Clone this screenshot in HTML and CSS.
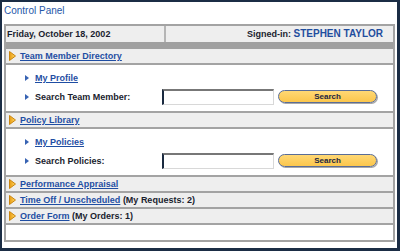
FILE: index.html
```html
<!DOCTYPE html>
<html lang="en">
<head>
<meta charset="UTF-8" />
<title>Control Panel</title>
<link rel="stylesheet" href="styles.css">
</head>
<body>

<div class="frame">
  <div class="title">Control Panel</div>

  <div class="panel">
    <div class="head">
      <div class="head-date">Friday, October 18, 2002</div>
      <div class="head-user">Signed-in: <span class="user-name">STEPHEN TAYLOR</span></div>
    </div>
    <div class="bar"></div>

    <div class="section">
      <svg class="arrow" width="7" height="10" viewBox="0 0 7 10"><defs><linearGradient id="ag" x1="0" y1="0" x2="1" y2="0"><stop offset="0" stop-color="#e89a10"/><stop offset="1" stop-color="#ffd865"/></linearGradient></defs><polygon points="0.5,0.5 6.5,5 0.5,9.5" fill="url(#ag)" stroke="#c98512" stroke-width="1"/></svg>
      <a href="#">Team Member Directory</a>
    </div>
    <div class="body">
      <div class="item">
        <svg class="bullet" width="4" height="6" viewBox="0 0 4 6"><polygon points="0,0 4,3 0,6" fill="#3763b3"/></svg>
        <a href="#">My Profile</a>
      </div>
      <div class="item">
        <span class="item-label"><svg class="bullet" width="4" height="6" viewBox="0 0 4 6"><polygon points="0,0 4,3 0,6" fill="#3763b3"/></svg>Search Team Member:</span>
        <input class="search-input" type="text">
        <button class="search-btn">Search</button>
      </div>
    </div>

    <div class="section">
      <svg class="arrow" width="7" height="10" viewBox="0 0 7 10"><polygon points="0.5,0.5 6.5,5 0.5,9.5" fill="url(#ag)" stroke="#c98512" stroke-width="1"/></svg>
      <a href="#">Policy Library</a>
    </div>
    <div class="body">
      <div class="item">
        <svg class="bullet" width="4" height="6" viewBox="0 0 4 6"><polygon points="0,0 4,3 0,6" fill="#3763b3"/></svg>
        <a href="#">My Policies</a>
      </div>
      <div class="item">
        <span class="item-label"><svg class="bullet" width="4" height="6" viewBox="0 0 4 6"><polygon points="0,0 4,3 0,6" fill="#3763b3"/></svg>Search Policies:</span>
        <input class="search-input" type="text">
        <button class="search-btn">Search</button>
      </div>
    </div>

    <div class="section">
      <svg class="arrow" width="7" height="10" viewBox="0 0 7 10"><polygon points="0.5,0.5 6.5,5 0.5,9.5" fill="url(#ag)" stroke="#c98512" stroke-width="1"/></svg>
      <a href="#">Performance Appraisal</a>
    </div>
    <div class="section">
      <svg class="arrow" width="7" height="10" viewBox="0 0 7 10"><polygon points="0.5,0.5 6.5,5 0.5,9.5" fill="url(#ag)" stroke="#c98512" stroke-width="1"/></svg>
      <a href="#">Time Off / Unscheduled</a>&nbsp;<span class="note">(My Requests: 2)</span>
    </div>
    <div class="section">
      <svg class="arrow" width="7" height="10" viewBox="0 0 7 10"><polygon points="0.5,0.5 6.5,5 0.5,9.5" fill="url(#ag)" stroke="#c98512" stroke-width="1"/></svg>
      <a href="#">Order Form</a>&nbsp;<span class="note">(My Orders: 1)</span>
    </div>
    <div class="blank"></div>
  </div>
</div>

</body>
</html>
```

FILE: styles.css
```css
  body {
    margin: 0;
    font-family: "Liberation Sans", Arial, sans-serif;
    background: #fff;
    color: #1a1d2e;
  }
  .frame {
    width: 400px;
    height: 251px;
    box-sizing: border-box;
    border: solid #1b2d45;
    border-width: 2px 3px 3px 2px;
  }
  .title {
    height: 22px;
    line-height: 17px;
    padding-left: 2px;
    font-size: 10px;
    color: #2456a8;
  }
  .panel {
    margin: 0 2px;
    border: 2px solid #a3a3a3;
  }

  /* header row */
  .head {
    display: flex;
    height: 16px;
    background: #eeeeee;
    font-size: 9px;
    font-weight: 700;
    line-height: 16px;
  }
  .head-date {
    width: 157px;
    padding-left: 1px;
    border-right: 2px solid #b5b5b5;
  }
  .head-user {
    flex: 1;
    text-align: right;
    padding-right: 10px;
  }
  .user-name {
    font-size: 10px;
    color: #1f4d9e;
  }
  .bar {
    height: 7px;
    background: #a0a0a0;
  }

  /* section rows */
  .section {
    display: flex;
    align-items: center;
    height: 14px;
    background: #eeeeee;
    border-bottom: 2px solid #a3a3a3;
    font-size: 9px;
    font-weight: 700;
  }
  .arrow {
    margin: 0 4px 0 3px;
  }
  a {
    color: #1f4ea3;
    text-decoration: underline;
  }
  .note {
    color: #1a1d2e;
  }

  /* white content blocks */
  .body {
    height: 42px;
    padding-top: 4px;
    border-bottom: 2px solid #a3a3a3;
    font-size: 9px;
    font-weight: 700;
  }
  .item {
    display: flex;
    align-items: center;
    height: 18px;
    padding-left: 19px;
  }
  .item + .item {
    height: 20px;
  }
  .bullet {
    margin-right: 6px;
  }
  .item-label {
    display: flex;
    align-items: center;
    width: 137px;
  }
  .search-input {
    box-sizing: border-box;
    width: 112px;
    height: 16px;
    margin: 0;
    padding: 0;
    background: #fff;
    border-style: solid;
    border-width: 2px 1px 1px 2px;
    border-color: #777 #d8d8d8 #d8d8d8 #1a2a40;
  }
  .search-btn {
    box-sizing: border-box;
    width: 99px;
    height: 13px;
    margin: 0 0 2px 4px;
    padding: 0;
    border: 1px solid #5a6d96;
    border-radius: 7px;
    background: linear-gradient(#ffd874, #fbc64c);
    box-shadow: 1px 1px 0 #a8a8a8;
    font-family: "Liberation Sans", Arial, sans-serif;
    font-size: 8px;
    font-weight: 700;
    line-height: 11px;
    color: #1a2540;
  }
  .blank {
    height: 15px;
  }
```
